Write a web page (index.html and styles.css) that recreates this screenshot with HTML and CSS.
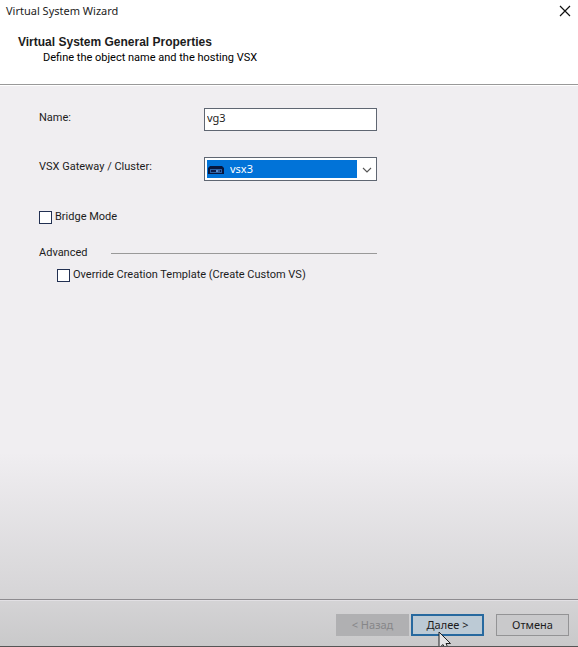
FILE: index.html
```html
<!DOCTYPE html>
<html lang="en">
<head>
    <meta charset="UTF-8">
    <title>Virtual System Wizard</title>
    <link rel="stylesheet" href="styles.css">
</head>
<body>
    <form class="wizard">
        <header class="wizard-header">
            <div class="title-bar">
                <div class="title">Virtual System Wizard</div>
                <button type="button" class="close" aria-label="Close">
                    <svg width="12" height="12" viewBox="0 0 12 12">
                        <path d="M1 1 L11 11 M11 1 L1 11" stroke="#111" stroke-width="1.2" fill="none"/>
                    </svg>
                </button>
            </div>
            <h1>Virtual System General Properties</h1>
            <p>Define the object name and the hosting VSX</p>
        </header>

        <main class="content">
            <div class="field">
                <label for="name">Name:</label>
                <input type="text" id="name" value="vg3">
            </div>

            <div class="field">
                <label for="gateway">VSX Gateway / Cluster:</label>
                <div class="combo">
                    <svg class="device" width="16" height="10" viewBox="0 0 16 10">
                        <path d="M2 1 H14 L16 3 V9 H0 V3 Z" fill="#07163d"/>
                        <rect x="2.5" y="4.5" width="11" height="3" fill="#0a1c4a" stroke="#2f62a4"/>
                        <path d="M8 5 L10 7 M10 5 L8 7 M11 5 V7" stroke="#5a8fce" stroke-width="1"/>
                    </svg>
                    <select id="gateway">
                        <option>vsx3</option>
                    </select>
                    <svg class="arrow" width="20" height="19" viewBox="0 0 20 19">
                        <path d="M7 8 L11 12 L15 8" stroke="#555" stroke-width="1.1" fill="none"/>
                    </svg>
                </div>
            </div>

            <div class="check">
                <input type="checkbox" id="bridge">
                <label for="bridge">Bridge Mode</label>
            </div>

            <div class="group-title">
                <span>Advanced</span>
                <div class="line"></div>
            </div>

            <div class="check nested">
                <input type="checkbox" id="override">
                <label for="override">Override Creation Template (Create Custom VS)</label>
            </div>
        </main>

        <footer class="button-bar" lang="ru">
            <button type="button" disabled>&lt; Назад</button>
            <button type="submit" class="next">
                Далее &gt;
                <svg class="pointer" width="13" height="20" viewBox="0 0 13 20">
                    <path d="M1 1 V17 L5 13.5 L8 19 L10.5 18 L8 12.5 H12.5 Z" fill="#e4e4e6" stroke="#222"/>
                </svg>
            </button>
            <button type="button" class="cancel">Отмена</button>
        </footer>
    </form>
</body>
</html>
```

FILE: styles.css
```css
* {
    box-sizing: border-box;
}
body {
    margin: 0;
    font-family: Roboto, "Liberation Sans", sans-serif;
    font-size: 11px;
    line-height: 16px;
    color: #1c1c1c;
}
.wizard {
    display: flex;
    flex-direction: column;
    min-height: 100vh;
    overflow: hidden;
    background: linear-gradient(#f0eef1 0, #f0eef1 70%, #d6d5d7 92%, #c9c9ca 100%);
    border-bottom: 1px solid #555;
}

.wizard-header {
    background: #fff;
    padding-bottom: 18px;
    border-bottom: 1px solid #999;
    box-shadow: 0 1px #fff;
}
.title-bar {
    display: flex;
    justify-content: space-between;
    align-items: center;
    height: 22px;
    padding: 0 7px 0 6px;
    margin-bottom: 12px;
}
.title {
    font-family: "Noto Sans", sans-serif;
    font-size: 11px;
}
.close {
    display: flex;
    padding: 0;
    border: none;
    background: none;
}
h1 {
    margin: 0 18px;
    font-family: "Liberation Sans", sans-serif;
    font-size: 12px;
    line-height: 16px;
    font-weight: bold;
}
p {
    margin: 0 43px;
    color: #000;
}

.content {
    flex: 1;
    padding: 23px 39px;
}
.field {
    display: flex;
    align-items: center;
    margin-bottom: 26px;
}
.field label {
    width: 165px;
    padding-bottom: 4px;
}
input[type="text"] {
    width: 173px;
    height: 23px;
    padding: 0 2px 4px;
    border: 1px solid #5f6672;
    background: #fff;
    color: #1c1c1c;
    font-family: "Noto Sans", sans-serif;
    font-size: 11px;
    outline: none;
}
.combo {
    position: relative;
    width: 173px;
    height: 24px;
    padding: 2px 19px 2px 2px;
    border: 1px solid #5f6672;
    background: #fff;
}
.combo select {
    appearance: none;
    display: block;
    width: 100%;
    height: 18px;
    padding: 0 0 1px 23px;
    border: none;
    border-radius: 0;
    background: #0173d8;
    color: #fff;
    font-family: "Noto Sans", sans-serif;
    font-size: 11px;
    outline: none;
}
.device {
    position: absolute;
    left: 3px;
    top: 7px;
}
.arrow {
    position: absolute;
    right: 0;
    top: 2px;
    pointer-events: none;
}

.check {
    display: flex;
    align-items: center;
    gap: 3px;
    padding-top: 2px;
}
.check input {
    appearance: none;
    width: 13px;
    height: 13px;
    margin: 0;
    border: 1px solid #223052;
    background: #fff;
}
.check input:checked {
    background: #0173d8;
}
.group-title {
    display: flex;
    align-items: center;
    width: 338px;
    margin: 20px 0 4px;
}
.group-title span {
    width: 72px;
}
.line {
    flex: 1;
    height: 1px;
    background: #999;
}
.nested {
    margin-left: 18px;
}

.button-bar {
    display: flex;
    justify-content: flex-end;
    gap: 2px;
    padding: 14px 9px 10px;
    border-top: 1px solid #8d8b8f;
    box-shadow: inset 0 1px #e2e0e4;
}
.button-bar button {
    width: 73px;
    height: 22px;
    padding: 0 0 2px;
    border: 1px solid #939395;
    background: #c9c9cb;
    color: #1c1c1c;
    font-family: "Noto Sans", sans-serif;
    font-size: 11px;
}
.button-bar button:disabled {
    border-color: #b0b0b2;
    background: #b0b0b2;
    color: #868688;
}
.button-bar .next {
    position: relative;
    border: 2px solid #27699f;
    background: #bccad5;
}
.button-bar .cancel {
    margin-left: 10px;
}
.pointer {
    position: absolute;
    left: 25px;
    top: 15px;
}
```
